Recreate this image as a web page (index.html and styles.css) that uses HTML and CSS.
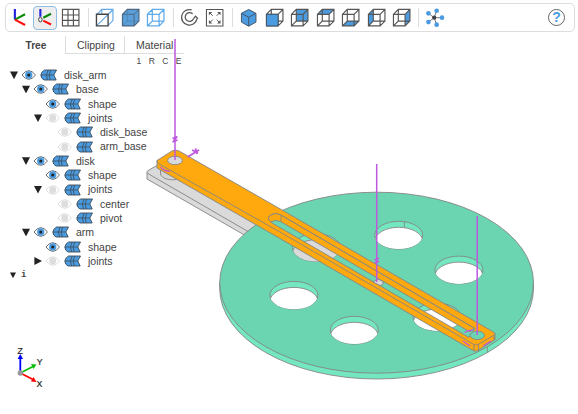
FILE: index.html
```html
<!DOCTYPE html>
<html lang="en">
<head>
<meta charset="utf-8">
<title>disk_arm</title>
<link rel="stylesheet" href="styles.css">
</head>
<body>
<svg class="defs" width="0" height="0" aria-hidden="true">
<defs>
<symbol id="eye" viewBox="0 0 16 12"><path d="M1 6Q8-3 15 6Q8 15 1 6Z" fill="#fff" stroke="#666" stroke-width="1"/><circle cx="8" cy="6" r="3.800" fill="#4a9be0"/><circle cx="8" cy="6" r="1.600" fill="#222"/></symbol>
<symbol id="eye-off" viewBox="0 0 16 12"><path d="M1 6Q8-3 15 6Q8 15 1 6Z" fill="#fff" stroke="#ddd" stroke-width="1"/><circle cx="8" cy="6" r="3.600" fill="#ddd"/></symbol>
<symbol id="part" viewBox="0 0 17 12"><path d="M4.500 1H16.500L13.800 6L16.200 11H4Q1 9.500 .8 6Q1.500 2.500 4.500 1Z" fill="#4a9be0" stroke="#3c4b58" stroke-width=".9"/><path d="M1 6H13.800M8.200 1Q5 6 7.500 11M10.800 1Q7.800 6 10.300 11" fill="none" stroke="#3c4b58" stroke-width=".8"/></symbol>
<symbol id="wire" viewBox="0 0 20 20"><path d="M1.500 6.500H13.500V18.500H1.500ZM1.500 6.500L6.500 1.500H18.500V13.500L13.500 18.500M13.500 6.500L18.500 1.500M6.500 1.500V13.500H18.500M6.500 13.500L1.500 18.500" fill="none" stroke="#555" stroke-width="1.200"/></symbol>
</defs>
</svg>
<header class="toolbar">
  <svg class="tool t-axes" viewBox="0 0 20 20"><path d="M4 1V12" stroke="#22d"/><path d="M4 12L14.500 6.500" stroke="#0a8a0a"/><path d="M4 12L14.500 17.500" stroke="#f11"/></svg>
  <span class="active"><svg class="tool t-axes" viewBox="0 0 20 20"><path d="M4.500 1V9" stroke="#22d"/><path d="M7.500 10L15.500 6" stroke="#0a8a0a"/><path d="M7.500 13L15.500 17" stroke="#f11"/><ellipse cx="4.500" cy="12" rx="1.800" ry="2.400" fill="none" stroke="#444" stroke-width="1"/></svg></span>
  <svg class="tool" viewBox="0 0 20 20"><path d="M1.500 1.500H18.500V18.500H1.500ZM1.500 7.200H18.500M1.500 12.800H18.500M7.200 1.500V18.500M12.800 1.500V18.500" fill="none" stroke="#555" stroke-width="1.200"/></svg>
  <i class="sep"></i>
  <svg class="tool" viewBox="0 0 20 20"><path d="M2 6.500L7 1.500H18.500V13L13.500 18M13.500 6.500L18.500 1.500M7 1.500V6M2 18L18.500 2" fill="none" stroke="#64a9e6" stroke-width="1.200"/><path d="M1.500 6.500H13.500V18.500H1.500Z" fill="none" stroke="#444" stroke-width="1.400"/></svg>
  <svg class="tool t-solid" viewBox="0 0 20 20"><path d="M1.500 6.500L6.500 1.500H18.500V13.500L13.500 18.500H1.500Z" fill="#5a9fda" stroke="#4c6680" stroke-width="1.200"/><path d="M1.500 6.500H13.500V18.500M13.500 6.500L18.500 1.500" fill="none" stroke="#4c6680"/><path d="M6.500 2V13.500H18M6.500 13.500L2 18" fill="none" stroke="#4c80ad" stroke-width=".8"/></svg>
  <svg class="tool t-wire" viewBox="0 0 20 20"><path d="M1.500 6.500H13.500V18.500H1.500ZM1.500 6.500L6.500 1.500H18.500V13.500L13.500 18.500M13.500 6.500L18.500 1.500M6.500 1.500V13.500H18.500M6.500 13.500L1.500 18.500" fill="none" stroke="#60aceb" stroke-width="1.300"/></svg>
  <i class="sep"></i>
  <svg class="tool t-reset" viewBox="0 0 20 20"><path d="M12 2A8 8 0 1 0 17.500 11M13 6A4.500 4.500 0 1 0 14 11M14 11L16 8.500L18.500 11" fill="none" stroke="#555" stroke-width="1.300"/></svg>
  <svg class="tool" viewBox="0 0 20 20"><path d="M1.500 1.500H18.500V18.500H1.500Z" fill="none" stroke="#555" stroke-width="1.100"/><path d="M4 7.500V4H7.500ZM12.500 4H16V7.500ZM4 12.500V16H7.500ZM16 12.500V16H12.500Z" fill="#555"/><path d="M5 5L8 8M15 5L12 8M5 15L8 12M15 15L12 12" stroke="#555"/></svg>
  <i class="sep sep-views"></i>
  <svg class="tool" viewBox="0 0 20 20"><path d="M10 1.500L17.500 5.500V14.500L10 18.800L2.500 14.500V5.500Z" fill="#4a9be0" stroke="#456"/><path d="M2.500 5.500L10 9.500L17.500 5.500M10 9.500V18.500" fill="none" stroke="#456"/></svg>
  <svg class="tool t-view" viewBox="0 0 20 20"><use href="#wire"/><path d="M1.500 6.500H13.500V18.500H1.500Z" fill="#4a9be0" stroke="#456"/></svg>
  <svg class="tool t-view" viewBox="0 0 20 20"><path d="M6.500 1.500H18.500V13.500H6.500Z" fill="#4a9be0"/><use href="#wire"/></svg>
  <svg class="tool t-view" viewBox="0 0 20 20"><path d="M1.500 6.500L6.500 1.500H18.500L13.500 6.500Z" fill="#4a9be0"/><use href="#wire"/></svg>
  <svg class="tool t-view" viewBox="0 0 20 20"><path d="M1.500 18.500L6.500 13.500H18.500L13.500 18.500Z" fill="#4a9be0"/><use href="#wire"/></svg>
  <svg class="tool t-view" viewBox="0 0 20 20"><path d="M1.500 6.500L6.500 1.500V13.500L1.500 18.500Z" fill="#4a9be0"/><use href="#wire"/></svg>
  <svg class="tool t-view" viewBox="0 0 20 20"><path d="M13.500 6.500L18.500 1.500V13.500L13.500 18.500Z" fill="#4a9be0"/><use href="#wire"/></svg>
  <i class="sep sep-explode"></i>
  <svg class="tool t-explode" viewBox="0 0 20 20"><path d="M8.500 10H17M8.500 10L11 2.500M8.500 10L11 17.500M8.500 10L2.500 5.500M8.500 10L2.500 14.500" stroke="#777"/><g fill="#4a9be0"><circle cx="16.500" cy="10" r="2.400"/><circle cx="11" cy="2.800" r="2.400"/><circle cx="11" cy="17.200" r="2.400"/><circle cx="2.500" cy="5.500" r="2.400"/><circle cx="2.500" cy="14.500" r="2.400"/></g><circle cx="8.500" cy="10" r="2.200" fill="#444"/></svg>
  <span class="help">?</span>
</header>
<main class="viewer">
<section class="panel">
  <nav class="tabs"><span class="tab selected">Tree</span><span class="tab clipping">Clipping</span><span class="tab material">Material</span></nav>
  <div class="modes"><span>1</span><span>R</span><span>C</span><span>E</span></div>
  <ul class="tree">
    <li><b class="down"></b><svg class="eye"><use href="#eye"/></svg><svg class="part"><use href="#part"/></svg>disk_arm</li>
    <li class="l1"><b class="down"></b><svg class="eye"><use href="#eye"/></svg><svg class="part"><use href="#part"/></svg>base</li>
    <li class="l2"><b></b><svg class="eye"><use href="#eye"/></svg><svg class="part"><use href="#part"/></svg>shape</li>
    <li class="l2"><b class="down"></b><svg class="eye"><use href="#eye-off"/></svg><svg class="part"><use href="#part"/></svg>joints</li>
    <li class="l3"><b></b><svg class="eye"><use href="#eye-off"/></svg><svg class="part"><use href="#part"/></svg>disk_base</li>
    <li class="l3"><b></b><svg class="eye"><use href="#eye-off"/></svg><svg class="part"><use href="#part"/></svg>arm_base</li>
    <li class="l1"><b class="down"></b><svg class="eye"><use href="#eye"/></svg><svg class="part"><use href="#part"/></svg>disk</li>
    <li class="l2"><b></b><svg class="eye"><use href="#eye"/></svg><svg class="part"><use href="#part"/></svg>shape</li>
    <li class="l2"><b class="down"></b><svg class="eye"><use href="#eye-off"/></svg><svg class="part"><use href="#part"/></svg>joints</li>
    <li class="l3"><b></b><svg class="eye"><use href="#eye-off"/></svg><svg class="part"><use href="#part"/></svg>center</li>
    <li class="l3"><b></b><svg class="eye"><use href="#eye-off"/></svg><svg class="part"><use href="#part"/></svg>pivot</li>
    <li class="l1"><b class="down"></b><svg class="eye"><use href="#eye"/></svg><svg class="part"><use href="#part"/></svg>arm</li>
    <li class="l2"><b></b><svg class="eye"><use href="#eye"/></svg><svg class="part"><use href="#part"/></svg>shape</li>
    <li class="l2"><b class="right"></b><svg class="eye"><use href="#eye-off"/></svg><svg class="part"><use href="#part"/></svg>joints</li>
  </ul>
  <div class="info"><b class="down"></b>i</div>
</section>
<svg class="scene" viewBox="0 0 578 414">
  <defs>
    <clipPath id="c1"><ellipse cx="398.700" cy="235.200" rx="24" ry="13.900"/></clipPath>
    <clipPath id="c2"><ellipse cx="458.900" cy="270" rx="24" ry="13.900"/></clipPath>
    <clipPath id="c3"><ellipse cx="293.900" cy="295.300" rx="24" ry="13.900"/></clipPath>
    <clipPath id="c4"><ellipse cx="354.300" cy="330.200" rx="24" ry="13.900"/></clipPath>
    <clipPath id="c5"><ellipse cx="316.400" cy="247.600" rx="24" ry="13.900"/></clipPath>
    <clipPath id="c6"><ellipse cx="437" cy="317" rx="24" ry="13.900"/></clipPath>
  </defs>
  <g stroke="#858585" stroke-width=".9" stroke-linejoin="round">
    <path d="M147 173Q146 171.500 149 170L157 165.500L258 224L247 236.500L147 179Z" fill="#dadada"/>
    <path d="M147 173L248 231.500" fill="none"/>
    <path d="M160.500 168V174C162 179 170 181 179 179V168Z" fill="#d5d5d5"/>
    <path d="M219.700 282.500V288.500A156.900 90.500 0 0 0 533.500 288.500V282.500Z" fill="#73e7c0"/>
    <ellipse cx="376.600" cy="282.700" rx="156.900" ry="90.500" fill="#6bd5b2"/>
    <path d="M487.300 347V352.500"/>
    <g fill="#73e7c0">
      <ellipse cx="398.700" cy="235.200" rx="24" ry="13.900"/><ellipse cx="458.900" cy="270" rx="24" ry="13.900"/><ellipse cx="293.900" cy="295.300" rx="24" ry="13.900"/><ellipse cx="354.300" cy="330.200" rx="24" ry="13.900"/><ellipse cx="316.400" cy="247.600" rx="24" ry="13.900"/><ellipse cx="437" cy="317" rx="24" ry="13.900"/>
    </g>
    <g fill="#fff">
      <g clip-path="url(#c1)"><ellipse cx="398.700" cy="241.200" rx="24" ry="13.900"/></g>
      <g clip-path="url(#c2)"><ellipse cx="458.900" cy="276" rx="24" ry="13.900"/></g>
      <g clip-path="url(#c3)"><ellipse cx="293.900" cy="301.300" rx="24" ry="13.900"/></g>
      <g clip-path="url(#c4)"><ellipse cx="354.300" cy="336.200" rx="24" ry="13.900"/></g>
      <g clip-path="url(#c5)"><ellipse cx="316.400" cy="253.600" rx="24" ry="13.900" fill="#dadada"/></g>
      <g clip-path="url(#c6)"><ellipse cx="437" cy="323" rx="24" ry="13.900"/></g>
    </g>
    <path d="M404.300 221.700V227.500"/>
    <path fill="#ffa90f" fill-rule="evenodd" d="M157 160.500L172 151Q175 149 179 151L282 210L493.500 332Q495.500 333.500 495 335V339.500L478 350.500Q475.500 352 473 350.500L280 238.500L157 168ZM269.500 216Q275 211.500 282 215.700L475 328.500L469 337.500L272 223Q267 219.500 269.500 216Z"/>
    <path fill="#ffa90f" d="M269.500 216Q275 211.500 282 215.700L474 328L470 332L280.500 221.500Q275 219 271 222Q267 219 269.500 216Z"/>
    <path fill="none" d="M281 216V221.500M157 160.500Q156.500 162.500 160 164.500L280 232L473 344Q475.500 345.500 478 344.500L493.500 335.500Q495 334.500 495 333.500M474 345V351M478.500 344.500V350.500M494 335.500V340"/>
    <ellipse cx="175" cy="160.500" rx="7.400" ry="4.200" fill="#dadada"/>
    <ellipse cx="477.300" cy="335.300" rx="7.200" ry="4.200" fill="#6bd5b2"/>
    <path d="M373 282L378 279L383 281.500V284.500L380 285.500Z" fill="#dadada"/>
  </g>
  <g fill="none" stroke="#bd58df" stroke-width="1.500">
    <path d="M175 39V160M376.700 164V282M477.200 216V335"/>
    <path d="M187.500 157L199 150M192 150L198 153M195.500 148.500L197 154M172.500 138.500L177.500 136.500M172.500 142L177.500 140M173.500 141L176.500 137.500M374.500 260L379 258M374.500 263L379 261" stroke-width="1.800"/>
    <path d="M160.500 167Q164 171 170 171.500M464.500 332.500Q468 330 473 329.800M463 341L470 346M483 346L491 341" stroke-width="1.200"/>
  </g>
  <g class="orientation">
    <path d="M20.300 373V357" stroke="#00f"/><path d="M17.600 359L20.300 354L23 359Z" fill="#00f"/>
    <path d="M20.300 373L33 366.500" stroke="#0bbd0b"/><path d="M31 364L36.500 364.500L33.500 369Z" fill="#0bbd0b"/>
    <path d="M20.300 373L33 379.500" stroke="red"/><path d="M33.500 377L36.500 382L31 381.500Z" fill="red"/>
    <circle cx="20.300" cy="373" r="2.700" fill="#999"/>
    <text x="17.400" y="353.700">Z</text><text x="36.700" y="365.200">Y</text><text x="36.500" y="387">X</text>
  </g>
</svg>
</main>
</body>
</html>
```

FILE: styles.css
```css
* { box-sizing: border-box; }
body { margin: 0; width: 578px; height: 414px; overflow: hidden; position: relative; background: #fff; color: #444; font: 10.5px/14.3px "Liberation Sans", sans-serif; }
.defs { position: absolute; }
.toolbar { display: flex; align-items: center; height: 29px; margin: 3px 3px 0 5px; padding: 0 9px 0 5px; border: 1px solid #ddd; border-radius: 5px; }
.tool { flex: none; width: 19.4px; height: 19.4px; }
.t-axes { fill: none; stroke-width: 2.2; }
.active { display: flex; align-items: center; justify-content: center; flex: none; width: 24px; height: 24px; margin: 0 4px 0 3px; border: 1px solid #8dbde5; border-radius: 4px; background: #eee; }
.sep { flex: none; width: 1px; height: 19px; margin: 0 6.5px 0 7px; background: #ddd; }
.t-solid, .t-wire { margin-left: 6.2px; }
.t-reset { margin-right: 5.4px; }
.sep-views { margin: 0 6.5px 0 7px; }
.t-view { margin-left: 6.2px; }
.sep-explode { margin: 0 7px 0 6px; }
.help { display: grid; place-items: center; width: 17px; height: 17px; margin-left: auto; border: 1px solid #666; border-radius: 50%; color: #4a9be0; font-weight: bold; font-size: 14px; }
.panel { width: 190px; }
.tabs { display: flex; align-items: center; height: 18px; margin-top: 4px; }
.tab { height: 18px; line-height: 19px; }
.selected { width: 66px; padding-left: 25.5px; border-right: 1.5px solid #ddd; font-size: 10.2px; font-weight: bold; }
.clipping { width: 59px; padding-left: 11px; border-right: 1px solid #ddd; border-bottom: 1px solid #ddd; }
.material { width: 59px; padding-left: 11px; border-bottom: 1px solid #ddd; }
.modes { display: flex; justify-content: space-between; width: 45px; height: 14px; margin-left: 136.5px; font-size: 8.5px; line-height: 15px; }
.tree { list-style: none; margin: 0; padding: 0 0 0 10px; }
.tree li { display: flex; align-items: center; height: 14.3px; }
.tree .l1 { padding-left: 12px; }
.tree .l2 { padding-left: 24px; }
.tree .l3 { padding-left: 36px; }
b { display: block; flex: none; width: 8px; height: 8px; margin-right: 3px; }
.down { background: #222; clip-path: polygon(0 5%, 100% 5%, 50% 100%); }
.right { background: #222; clip-path: polygon(5% 0, 100% 50%, 5% 100%); }
.eye { flex: none; width: 15.5px; height: 12px; margin-right: 3.5px; }
.part { flex: none; width: 17px; height: 12px; margin-right: 7px; }
.info { display: flex; align-items: center; padding-left: 10px; height: 14px; font: bold 9px "Liberation Mono", monospace; }
.info b { width: 6px; height: 6px; margin-right: 5px; }
.scene { position: absolute; left: 0; top: 0; width: 578px; height: 414px; pointer-events: none; }
.orientation { stroke-width: 1.8; }
.orientation text { font-size: 8.7px; fill: #222; stroke: #222; stroke-width: .2; }
```
